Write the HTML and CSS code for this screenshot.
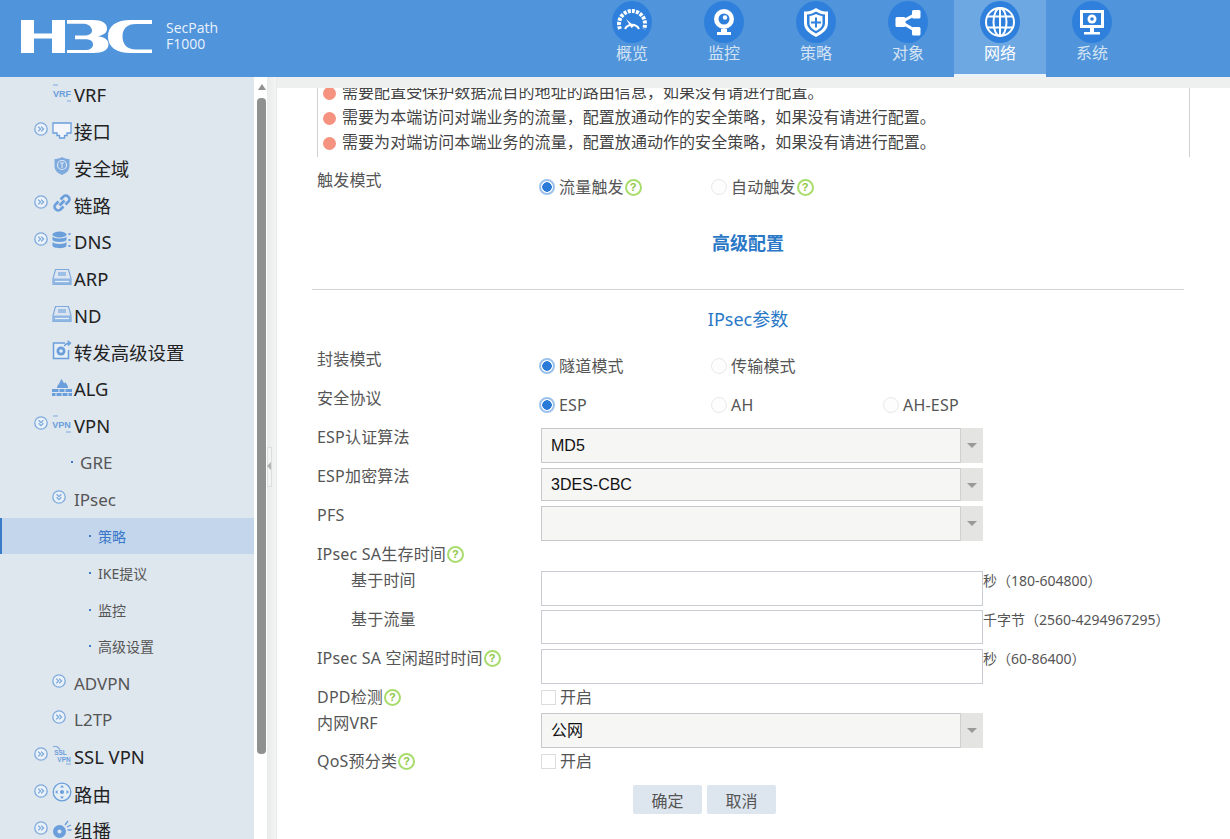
FILE: index.html
```html
<!DOCTYPE html>
<html lang="zh-CN">
<head>
<meta charset="utf-8">
<title>H3C SecPath F1000</title>
<link rel="stylesheet" href="styles.css">
</head>
<body>
<svg class="defs" width="0" height="0" aria-hidden="true">
  <symbol id="chev-r" viewBox="0 0 14 14"><circle cx="7" cy="7" r="6.2" fill="#eaf1f8" stroke="#7eaadd" stroke-width="1.3"/><path d="M4.2 4.6 6.6 7 4.2 9.4M7.2 4.6 9.6 7 7.2 9.4" fill="none" stroke="#7eaadd" stroke-width="1.3"/></symbol>
  <symbol id="chev-d" viewBox="0 0 14 14"><circle cx="7" cy="7" r="6.2" fill="#eaf1f8" stroke="#7eaadd" stroke-width="1.3"/><path d="M4.6 4.2 7 6.6 9.4 4.2M4.6 7.2 7 9.6 9.4 7.2" fill="none" stroke="#7eaadd" stroke-width="1.3"/></symbol>
  <symbol id="device" viewBox="0 0 20 20"><path d="M3.5 2.5h13l2.5 9v6H1v-6z" fill="#dde6f0" stroke="#7eaadd" stroke-width="1.2"/><path d="M1 11.5h18v6H1z" fill="#8fb6e2"/><path d="M6 5h8v4H6z" fill="#9dbfe6"/><path d="M3 14.5h14" stroke="#e8f0f8" stroke-width="1.2"/></symbol>
</svg>
<div class="app">
  <header class="topbar">
    <div class="brand">
      <svg class="logo" viewBox="0 0 131 34" role="img" aria-label="H3C">
        <path fill="#fff" d="M0 0h13v13.500h18V0h13v33H31V18.500H13V33H0z"/>
        <path fill="#fff" d="M46 0h26c9 0 14 3 14 8.500 0 4-3 6.500-9 7.800 7 1 10.500 3.800 10.500 8 0 5.700-5.500 8.700-15 8.700H46v-3h18c5 0 8-2 8-5.500 0-3.300-3-5.200-8-5.200H54v-3.800h9c5 0 8-1.800 8-4.800S68 3.800 63 3.800H46z"/>
        <path fill="#fff" d="M131 4h-16c-9 0-13.500 4.800-13.500 12.500S106 29.500 115 29.500h16V33h-21c-15 0-23-6-23-16.500S95 0 110 0h21z"/>
      </svg>
      <div class="product"><div>SecPath</div><div>F1000</div></div>
    </div>
    <nav class="tabs">
      <a class="tab"><span class="disc"><svg viewBox="0 0 40 40"><path d="M8 27a13 13 0 1 1 24 0" fill="none" stroke="#fff" stroke-width="4" stroke-dasharray="3 1.200"/><path d="M13 27a8 8 0 0 1 14 0" fill="none" stroke="#fff" stroke-width="2"/><path d="M14 17l8 7-2.500 2z" fill="#fff"/></svg></span><span>概览</span></a>
      <a class="tab"><span class="disc"><svg viewBox="0 0 40 40"><circle cx="20" cy="17" r="10" fill="#fff"/><circle cx="20" cy="17" r="5.500" fill="#2e80dc"/><circle cx="21" cy="15.500" r="2.200" fill="#fff"/><path d="M17 27h6v3h4v3H13v-3h4z" fill="#fff"/></svg></span><span>监控</span></a>
      <a class="tab"><span class="disc"><svg viewBox="0 0 40 40"><path d="M20 6c4 3 8 3.500 12 3.500V21c0 7-6 11-12 14-6-3-12-7-12-14V9.500C12 9.500 16 9 20 6z" fill="#fff"/><path d="M20 9.500c3 2 6 2.800 9 3V21c0 5-4.500 8-9 10.500-4.500-2.500-9-5.500-9-10.500v-8.500c3-.2 6-1 9-3z" fill="#2e80dc"/><path d="M20 12c2 1.200 4 1.800 6.500 2v7c0 4-3 6-6.500 8-3.500-2-6.500-4-6.500-8v-7c2.500-.2 4.500-.8 6.500-2z" fill="#fff"/><path d="M19 15.500h2v4h4v2h-4v4h-2v-4h-4v-2h4z" fill="#2e80dc"/></svg></span><span>策略</span></a>
      <a class="tab"><span class="disc"><svg viewBox="0 0 40 40"><path d="M28 12 13 20l15 9" fill="none" stroke="#fff" stroke-width="3"/><rect x="24" y="8" width="8.500" height="8.500" rx="1.500" fill="#fff"/><rect x="24" y="25" width="8.500" height="8.500" rx="1.500" fill="#fff"/><rect x="7.500" y="15" width="10" height="10" rx="1.500" fill="#fff"/></svg></span><span>对象</span></a>
      <a class="tab active"><span class="disc"><svg viewBox="0 0 40 40"><g fill="none" stroke="#fff" stroke-width="2"><circle cx="20" cy="20" r="14"/><ellipse cx="20" cy="20" rx="6.500" ry="14"/><path d="M20 6v28M7 14.500h26M7 25.500h26"/></g></svg></span><span>网络</span></a>
      <a class="tab"><span class="disc"><svg viewBox="0 0 40 40"><path d="M8 8h24v18H8z" fill="#fff"/><path d="M11 11h18v12H11z" fill="#2e80dc"/><circle cx="20" cy="17" r="4.500" fill="#fff"/><circle cx="20" cy="17" r="1.800" fill="#2e80dc"/><path d="M18 26h4v4h-4zM12 30h16v2.500H12z" fill="#fff"/></svg></span><span>系统</span></a>
    </nav>
  </header>

  <div class="body">
    <aside class="tree">
      <div class="node"><span class="exp"></span><svg class="ico" viewBox="0 0 20 20"><path d="M1 2h5M15 18h4" stroke="#7eaadd" fill="none" stroke-width="1.200"/><text x="10" y="13.500" class="ico-text">VRF</text></svg><span class="t1">VRF</span></div>
      <div class="node"><svg class="exp"><use href="#chev-r"/></svg><svg class="ico" viewBox="0 0 20 20"><path d="M1 3h18v10h-4v2.500h-2.500V18h-5v-2.500H5V13H1z" fill="#f2f6fa" stroke="#6a9fdc" stroke-width="1.300"/></svg><span class="t1">接口</span></div>
      <div class="node"><span class="exp"></span><svg class="ico" viewBox="0 0 20 20"><path d="M10 1c2.500 1.500 5 2 7.500 2v7c0 4.500-3.500 7.500-7.500 9-4-1.500-7.500-4.500-7.500-9V3C5 3 7.500 2.500 10 1z" fill="#7eaadd"/><circle cx="10" cy="9" r="4.500" fill="none" stroke="#dbe7f4" stroke-width="1.200"/><path d="M8 7h4M10 7v5" stroke="#dbe7f4" stroke-width="1.200"/></svg><span class="t1">安全域</span></div>
      <div class="node"><svg class="exp"><use href="#chev-r"/></svg><svg class="ico" viewBox="0 0 20 20"><g fill="none" stroke="#6a9fdc" stroke-width="2.600"><path d="M8.500 6.500l3-3a3 3 0 0 1 4.500 0l.5.5a3 3 0 0 1 0 4.500l-3 3"/><path d="M11.500 13.500l-3 3a3 3 0 0 1-4.500 0l-.5-.5a3 3 0 0 1 0-4.500l3-3"/><path d="M7.500 12.500l5-5"/></g></svg><span class="t1">链路</span></div>
      <div class="node"><svg class="exp"><use href="#chev-r"/></svg><svg class="ico" viewBox="0 0 20 20"><g fill="#6a9fdc"><ellipse cx="7.500" cy="4.500" rx="7" ry="3"/><path d="M.5 6.500c1 2.500 13 2.500 14 0v3.500c-1 2.500-13 2.500-14 0zM.5 12c1 2.500 13 2.500 14 0v3.500c0 3.500-14 3.500-14 0z"/><path d="M16.500 3h2v2h-2zM16.500 9h2v2h-2zM16.500 15h2v2h-2z"/></g></svg><span class="t1">DNS</span></div>
      <div class="node"><span class="exp"></span><svg class="ico"><use href="#device"/></svg><span class="t1">ARP</span></div>
      <div class="node"><span class="exp"></span><svg class="ico"><use href="#device"/></svg><span class="t1">ND</span></div>
      <div class="node"><span class="exp"></span><svg class="ico" viewBox="0 0 20 20"><path d="M13 3H1.500v15.500h15V10" fill="#e6eef6" stroke="#6a9fdc" stroke-width="1.500"/><path d="M12 6c2-2.500 4-3 5.500-3M15.500 .8 18.500 3l-2.500 2.500" fill="none" stroke="#6a9fdc" stroke-width="1.300"/><circle cx="9" cy="11" r="4.500" fill="#6a9fdc"/><circle cx="9" cy="11" r="1.800" fill="#e6eef6"/></svg><span class="t1">转发高级设置</span></div>
      <div class="node"><span class="exp"></span><svg class="ico" viewBox="0 0 20 20"><path d="M5 11c0-3 3-4 4-9 2 1 1.500 3 3 4 1 .7 1-1 1-1 2 2 3 4 3 6z" fill="#6a9fdc"/><path d="M0 12h20v3H0zM0 16h20v3H0z" fill="#6a9fdc"/><path d="M7 12v3M13 12v3M4 16v3M10 16v3M16 16v3" stroke="#dde6ee"/></svg><span class="t1">ALG</span></div>
      <div class="node"><svg class="exp"><use href="#chev-d"/></svg><svg class="ico" viewBox="0 0 20 20"><path d="M1 2h5M14 18h5" stroke="#7eaadd" fill="none" stroke-width="1.200"/><text x="9.500" y="13.500" class="ico-text">VPN</text></svg><span class="t1">VPN</span></div>
      <div class="node"><span class="dot d2"></span><span class="t2 at80">GRE</span></div>
      <div class="node"><svg class="exp e2"><use href="#chev-d"/></svg><span class="t2">IPsec</span></div>
      <div class="node selected"><span class="dot d3"></span><span class="t3">策略</span></div>
      <div class="node"><span class="dot d3"></span><span class="t3">IKE提议</span></div>
      <div class="node"><span class="dot d3"></span><span class="t3">监控</span></div>
      <div class="node"><span class="dot d3"></span><span class="t3">高级设置</span></div>
      <div class="node"><svg class="exp e2"><use href="#chev-r"/></svg><span class="t2">ADVPN</span></div>
      <div class="node"><svg class="exp e2"><use href="#chev-r"/></svg><span class="t2">L2TP</span></div>
      <div class="node"><svg class="exp"><use href="#chev-r"/></svg><svg class="ico" viewBox="0 0 20 20"><path d="M1 1.500h4l3 3M14 19h5" stroke="#7eaadd" fill="none" stroke-width="1.200"/><text x="8.500" y="9.500" class="ico-text small">SSL</text><text x="12" y="17" class="ico-text small">VPN</text></svg><span class="t1">SSL VPN</span></div>
      <div class="node"><svg class="exp"><use href="#chev-r"/></svg><svg class="ico" viewBox="0 0 20 20"><circle cx="10" cy="10" r="8.800" fill="#e6eef6" stroke="#6a9fdc" stroke-width="1.300"/><circle cx="10" cy="10" r="2" fill="#6a9fdc"/><path d="M10 3l2 2.500H8zM10 17l2-2.500H8zM3 10l2.500 2V8zM17 10l-2.500 2V8z" fill="#6a9fdc"/></svg><span class="t1">路由</span></div>
      <div class="node"><svg class="exp"><use href="#chev-r"/></svg><svg class="ico" viewBox="0 0 20 20"><circle cx="7.500" cy="12.500" r="6.500" fill="#6a9fdc"/><circle cx="7.500" cy="12.500" r="2" fill="#dde6ee"/><path d="M13 6l3-4M15 8l4-2M15.500 11h4" stroke="#6a9fdc" stroke-width="1.300"/></svg><span class="t1">组播</span></div>
    </aside>

    <div class="gutter">
      <span class="arrow-up"></span>
      <span class="thumb"></span>
      <span class="splitter"></span>
    </div>

    <main class="main">
      <div class="notes-clip">
        <ul class="notes">
          <li>需要配置受保护数据流目的地址的路由信息，如果没有请进行配置。</li>
          <li>需要为本端访问对端业务的流量，配置放通动作的安全策略，如果没有请进行配置。</li>
          <li>需要为对端访问本端业务的流量，配置放通动作的安全策略，如果没有请进行配置。</li>
        </ul>
      </div>
      <form class="form">
        <div class="row row-trigger">
          <label class="lbl">触发模式</label>
          <div class="radios">
            <span class="radio on">流量触发<i class="help">?</i></span>
            <span class="radio">自动触发<i class="help">?</i></span>
          </div>
        </div>
        <h3 class="adv">高级配置</h3>
        <hr class="rule">
        <h4 class="sect">IPsec参数</h4>

        <div class="row">
          <label class="lbl">封装模式</label>
          <div class="radios">
            <span class="radio on">隧道模式</span>
            <span class="radio">传输模式</span>
          </div>
        </div>
        <div class="row">
          <label class="lbl">安全协议</label>
          <div class="radios">
            <span class="radio on">ESP</span>
            <span class="radio">AH</span>
            <span class="radio">AH-ESP</span>
          </div>
        </div>
        <div class="row">
          <label class="lbl">ESP认证算法</label>
          <div class="combo">MD5<span class="caret"></span></div>
        </div>
        <div class="row">
          <label class="lbl">ESP加密算法</label>
          <div class="combo combo-b">3DES-CBC<span class="caret"></span></div>
        </div>
        <div class="row">
          <label class="lbl">PFS</label>
          <div class="combo"><span class="caret"></span></div>
        </div>
        <div class="row row-s">
          <label class="lbl">IPsec SA生存时间<i class="help">?</i></label>
        </div>
        <div class="row">
          <label class="lbl sub">基于时间</label>
          <input class="field" type="text" aria-label="基于时间"><span class="unit">秒（180-604800）</span>
        </div>
        <div class="row">
          <label class="lbl sub">基于流量</label>
          <input class="field field-b" type="text" aria-label="基于流量"><span class="unit">千字节（2560-4294967295）</span>
        </div>
        <div class="row">
          <label class="lbl">IPsec SA 空闲超时时间<i class="help">?</i></label>
          <input class="field" type="text" aria-label="空闲超时时间"><span class="unit">秒（60-86400）</span>
        </div>
        <div class="row row-s">
          <label class="lbl">DPD检测<i class="help">?</i></label>
          <span class="check">开启</span>
        </div>
        <div class="row row-vrf">
          <label class="lbl">内网VRF</label>
          <div class="combo combo-vrf">公网<span class="caret"></span></div>
        </div>
        <div class="row row-s">
          <label class="lbl">QoS预分类<i class="help">?</i></label>
          <span class="check">开启</span>
        </div>
        <div class="actions">
          <button class="btn" type="button">确定</button>
          <button class="btn" type="button">取消</button>
        </div>
      </form>
    </main>
  </div>
</div>
</body>
</html>
```
FILE: styles.css
```css
*, *::before, *::after { box-sizing: border-box; }
html, body { margin: 0; height: 100%; overflow: hidden; }
body {
  font-family: "Noto Sans", "Noto Sans CJK SC", sans-serif;
  font-size: 16px;
  color: #555;
  background: #fff;
}
.defs { position: absolute; }
.app { height: 839px; display: flex; flex-direction: column; }

.topbar {
  height: 77px;
  flex: none;
  background: #5094db;
  display: flex;
  color: #fff;
}
.brand { display: flex; align-items: flex-start; width: 586px; padding: 20px 0 0 21px; }
.logo { width: 131px; height: 34px; display: block; }
.product {
  margin: 0 0 0 14px;
  font-family: "Open Sans", sans-serif;
  font-size: 14px;
  line-height: 16px;
  color: #eaf2fb;
}
.tabs { display: flex; }
.tab {
  width: 92px;
  display: flex;
  flex-direction: column;
  align-items: center;
  color: #d4e3f4;
  line-height: 22px;
}
.tab.active { background: #6ea8e3; border-bottom: 3px solid #eaf2fa; color: #fff; }
.disc {
  width: 40px;
  height: 42px;
  margin-top: 1px;
  margin-bottom: -1px;
  border-radius: 50%;
  background: #2e80dc;
  display: block;
}
.disc svg { width: 40px; height: 42px; display: block; }

.body { flex: 1; display: flex; min-height: 0; }

.tree { width: 254px; flex: none; background: #dee6ee; overflow: hidden; }
.node { height: 36.800px; display: flex; align-items: center; padding-left: 34px; position: relative; color: #222; }
.node:first-child { margin-top: -1px; }
.node.selected { background: #c3d6eb; border-left: 2px solid #3a7cc7; }
.exp { width: 14px; height: 14px; flex: none; margin: -5px 4px 0 0; display: block; }
.e2 { margin: -5px 8px 0 18px; }
.ico { width: 20px; height: 20px; flex: none; margin: -3px 2px 0 0; }
.ico-text { font-family: "Liberation Sans", sans-serif; font-size: 9px; font-weight: 700; fill: #6a9fdc; text-anchor: middle; }
.ico-text.small { font-size: 6.500px; }
.t1 { font-size: 18.400px; color: #222; }
.t2 { font-size: 17px; color: #555; }
.at80 { margin-left: 7px; }
.t3 { font-size: 14px; color: #555; margin-left: 7px; }
.selected .t3 { color: #3a78c9; }
.dot { width: 2px; height: 2px; background: #3a7cc7; flex: none; }
.d2 { margin-left: 37px; }
.d3 { margin-left: 55px; }
.selected .d3 { margin-left: 53px; }

.gutter {
  width: 23px;
  flex: none;
  position: relative;
  display: flex;
  flex-direction: column;
  background: linear-gradient(90deg, #fff 0 13px, #e9ebeb 13px, #f3f4f4 22px, #dfe1e1 23px);
}
.arrow-up {
  margin: 7px 0 0 4px;
  width: 8px;
  height: 6px;
  border: 4px solid transparent;
  border-top: 0;
  border-bottom: 6px solid #8f9090;
}
.thumb { width: 9px; height: 656px; margin: 8px 0 0 3px; border-radius: 4px; background: #8f9090; }
.splitter {
  position: absolute;
  left: 13px;
  top: 370px;
  width: 5px;
  height: 40px;
  background: #f2f3f3;
  border: 1px solid #dcdede;
}
.splitter::after {
  content: "";
  position: absolute;
  top: 14px;
  left: -1px;
  width: 4px;
  height: 8px;
  border: 4px solid transparent;
  border-left: 0;
  border-right: 4px solid #b0b3b3;
}

.main { flex: 1; min-width: 0; overflow: hidden; background: #fff; border-top: 11px solid #eef0f0; }
.notes-clip {
  width: 873px;
  height: 69px;
  margin-left: 40px;
  overflow: hidden;
  border-left: 1px solid #d0d0d0;
  border-right: 1px solid #d0d0d0;
}
.notes { margin: -8px 0 0; padding: 0; list-style: none; color: #444; letter-spacing: .05px; }
.notes li { height: 25px; line-height: 25px; padding-left: 24px; position: relative; white-space: nowrap; }
.notes li::before {
  content: "";
  position: absolute;
  left: 5px;
  top: 7px;
  width: 13px;
  height: 13px;
  border-radius: 50%;
  background: #f59280;
}

.form { width: 872px; margin-left: 35px; }
.row { display: flex; height: 39px; align-items: flex-start; }
.row-s { height: 26px; }
.row-trigger { height: 48px; padding-top: 11px; }
.row-vrf { height: 38px; }
.lbl { width: 229px; flex: none; margin-top: 1px; padding-left: 5px; line-height: 22px; letter-spacing: .2px; white-space: nowrap; display: flex; align-items: center; }
.lbl.sub { padding-left: 39px; }
.help {
  width: 17px;
  height: 17px;
  margin-left: 1px;
  flex: none;
  border: 2px solid #a8dc6c;
  border-radius: 50%;
  color: #8cc63f;
  font: 700 11px/13px "Liberation Sans", sans-serif;
  text-align: center;
  display: inline-block;
}
.radios { display: flex; margin: 8px 0 0 -2px; }
.radio {
  width: 172px;
  display: flex;
  align-items: center;
  line-height: 22px;
  letter-spacing: .2px;
  white-space: nowrap;
}
.radio::before {
  content: "";
  width: 16px;
  height: 16px;
  margin-right: 4px;
  flex: none;
  border-radius: 50%;
  border: 1px solid #e8e8e8;
  background: #fdfdfd;
}
.radio.on::before {
  border: 2px solid #9cc2ec;
  background: radial-gradient(circle, #2a7bd8 0 4.500px, #fff 5px);
}
.combo {
  width: 442px;
  height: 35px;
  margin-top: 3px;
  padding-left: 9px;
  position: relative;
  background: #f6f6f5;
  border: 1px solid #c6c8ca;
  font-family: "Liberation Sans", "Noto Sans CJK SC", sans-serif;
  color: #111;
  line-height: 33px;
}
.combo-b { height: 33px; margin-top: 4px; line-height: 31px; }
.combo-vrf { margin-top: 2px; }
.caret {
  position: absolute;
  top: -1px;
  right: -1px;
  bottom: -1px;
  width: 23px;
  background: #e4e4e2;
  border-left: 1px solid #cfd0d0;
}
.caret::after {
  content: "";
  position: absolute;
  top: 15px;
  left: 6px;
  width: 10px;
  height: 5px;
  border: 5px solid transparent;
  border-bottom: 0;
  border-top: 5px solid #9a9a9a;
}
.field {
  width: 442px;
  height: 35px;
  margin: 3px 0 0;
  padding: 0 8px;
  flex: none;
  background: #fff;
  border: 1px solid #c9ccd2;
  border-radius: 0;
  outline: none;
}
.field-b { height: 34px; }
.unit { font-size: 14px; line-height: 22px; margin-top: 2px; color: #555; white-space: nowrap; }
.check { display: flex; align-items: center; margin-top: 1px; line-height: 22px; }
.check::before {
  content: "";
  width: 15px;
  height: 15px;
  margin-right: 4px;
  background: #fff;
  border: 1px solid #dcdcdc;
}
.actions { display: flex; gap: 5px; margin: 10px 0 0 321px; }
.btn {
  width: 69px;
  height: 29px;
  padding: 0;
  background: #dde6ee;
  border: 0;
  border-radius: 2px;
  font: inherit;
  color: #555;
}

.adv { margin: 27px 0 0; text-align: center; font-size: 18px; line-height: 22px; font-weight: 700; color: #2a78c6; }
.rule { margin: 35px 0 0; border: 0; border-top: 1px solid #d3d3d3; }
.sect { margin: 17px 0 16px; text-align: center; font-size: 18px; line-height: 24px; font-weight: 400; color: #2a78c6; }
```
